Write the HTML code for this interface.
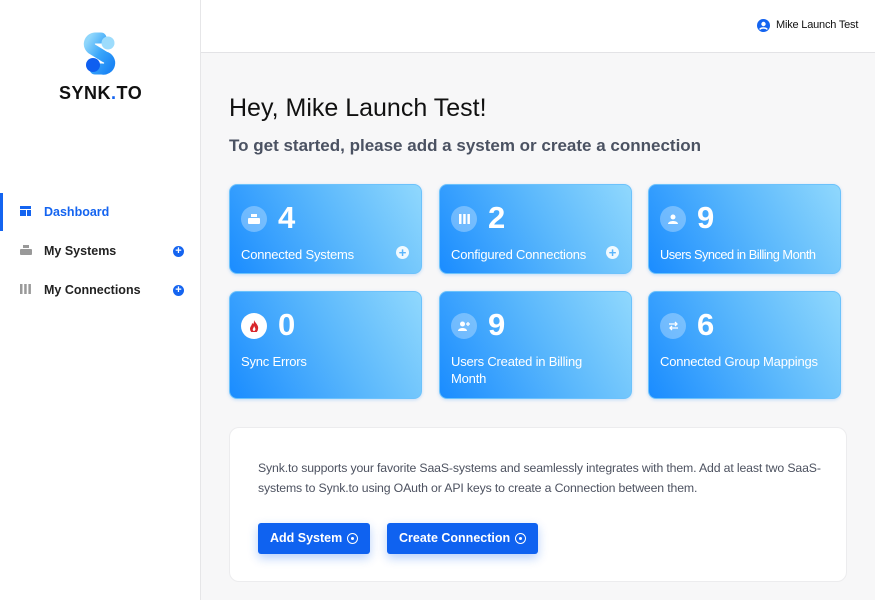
<!DOCTYPE html>
<html><head><meta charset="utf-8"><style>
*{box-sizing:border-box;margin:0;padding:0}
body{width:875px;height:600px;overflow:hidden;font-family:"Liberation Sans",sans-serif;background:#f7f7f8;position:relative}
.side{position:absolute;left:0;top:0;width:201px;height:600px;background:#fff;border-right:1px solid #e6e6e8}
.top{position:absolute;left:201px;top:0;right:0;height:53px;background:#fff;border-bottom:1px solid #e3e3e6}
.nav{position:absolute;left:0;width:200px;height:38px;font-size:12.5px;font-weight:bold;color:#222;display:flex;align-items:center}
.nav .ic{position:absolute;left:20px;top:13px}
.nav span.t{position:absolute;left:44px}
.nav .plus{position:absolute;left:173px;top:14px;width:11px;height:11px;border-radius:50%;background:#1464f0;color:#fff;font-size:11px;line-height:11px;text-align:center}
.card{position:absolute;width:193px;border-radius:8px;background:linear-gradient(60deg,#1a8cff 0%,#5bb8fc 55%,#90d8fd 100%);border:1px solid #6cc2fb;color:#fff;box-shadow:0 1px 3px rgba(30,140,255,.25)}
.card .c{position:absolute;left:11px;top:21px;width:26px;height:26px;border-radius:50%;background:rgba(255,255,255,.3);display:flex;align-items:center;justify-content:center}
.card .n{position:absolute;left:48px;top:15px;font-size:31px;font-weight:bold;line-height:36px}
.card .l{position:absolute;left:11px;top:61px;font-size:13px;line-height:17px;width:175px;letter-spacing:-0.2px}
.card .p{position:absolute;right:12px;top:61px;width:13px;height:13px;border-radius:50%;background:rgba(255,255,255,.9);color:#5ab5fb;font-size:13px;line-height:13px;text-align:center;font-weight:bold}
.btn{position:absolute;top:523px;height:31px;background:#0f62f0;border-radius:3px;color:#fff;font-size:12.5px;font-weight:bold;line-height:31px;padding-left:12px;box-shadow:0 4px 10px rgba(15,98,240,.3)}
.btn .o{position:absolute;right:12px;top:10px;width:11px;height:11px;border:1.5px solid #fff;border-radius:50%}
.btn .o:after{content:"";position:absolute;left:2.5px;top:2.5px;width:3px;height:3px;background:#fff;border-radius:50%}
</style></head><body>
<div class="side">
 <svg style="position:absolute;left:83px;top:32px" width="34" height="46" viewBox="0 0 34 46">
  <defs><linearGradient id="g" x1="0" y1="0" x2="1" y2="1"><stop offset="0" stop-color="#8fd6fb"/><stop offset="0.5" stop-color="#3aa6fa"/><stop offset="1" stop-color="#1c86f5"/></linearGradient></defs>
  <path d="M18 6H12a6 6 0 0 0-3 11l13 8a6 6 0 0 1-3 12H12" fill="none" stroke="url(#g)" stroke-width="11" stroke-linecap="round" stroke-linejoin="round"/>
  <circle cx="25" cy="11" r="6.5" fill="#9ddcfc"/>
  <circle cx="10" cy="33" r="7" fill="#0f5ff0"/>
 </svg>
 <div style="position:absolute;left:59px;top:83px;font-size:18px;font-weight:bold;letter-spacing:0.5px;color:#111">SYNK<span style="color:#1464f0">.</span>TO</div>
 <div style="position:absolute;left:0;top:193px;width:3px;height:38px;background:#1464f0"></div>
 <div class="nav" style="top:193px;color:#1464f0"><svg class="ic" width="11" height="10"><rect x="0" y="0" width="11" height="3" fill="#1464f0"/><rect x="0" y="4" width="6" height="6" fill="#1464f0"/><rect x="7" y="4" width="4" height="6" fill="#1464f0"/></svg><span class="t">Dashboard</span></div>
 <div class="nav" style="top:232px"><svg class="ic" width="12" height="10"><rect x="3" y="0" width="6" height="3" fill="#999"/><rect x="0" y="4" width="12" height="6" rx="1" fill="#999"/></svg><span class="t">My Systems</span><span class="plus">+</span></div>
 <div class="nav" style="top:271px"><svg class="ic" width="11" height="10"><rect x="0" y="0" width="2.5" height="10" fill="#999"/><rect x="4.2" y="0" width="2.5" height="10" fill="#999"/><rect x="8.4" y="0" width="2.5" height="10" fill="#999"/></svg><span class="t">My Connections</span><span class="plus">+</span></div>
</div>
<div class="top">
 <svg style="position:absolute;left:556px;top:19px" width="13" height="13" viewBox="0 0 13 13"><circle cx="6.5" cy="6.5" r="6.5" fill="#1464f0"/><circle cx="6.5" cy="5" r="2.2" fill="#fff"/><path d="M2.8 10.5c1-2 6.4-2 7.4 0" stroke="#fff" stroke-width="1.6" fill="none"/></svg>
 <div style="position:absolute;left:575px;top:19px;font-size:11px;color:#111;letter-spacing:-0.2px">Mike Launch Test</div>
</div>
<div style="position:absolute;left:229px;top:94px;font-size:25px;color:#111">Hey, Mike Launch Test!</div>
<div style="position:absolute;left:229px;top:136px;font-size:17px;font-weight:bold;color:#4b5262">To get started, please add a system or create a connection</div>

<div class="card" style="left:229px;top:184px;height:90px"><div class="c"><svg width="12" height="10"><rect x="3" y="0" width="6" height="3" fill="#fff"/><rect x="0" y="4" width="12" height="6" rx="1" fill="#fff"/></svg></div><div class="n">4</div><div class="l">Connected Systems</div><div class="p">+</div></div>
<div class="card" style="left:439px;top:184px;height:90px"><div class="c"><svg width="11" height="10"><rect x="0" width="2.5" height="10" fill="#fff"/><rect x="4.2" width="2.5" height="10" fill="#fff"/><rect x="8.4" width="2.5" height="10" fill="#fff"/></svg></div><div class="n">2</div><div class="l">Configured Connections</div><div class="p">+</div></div>
<div class="card" style="left:648px;top:184px;height:90px"><div class="c"><svg width="10" height="10"><circle cx="5" cy="3" r="2.5" fill="#fff"/><path d="M0 10c0-4 10-4 10 0z" fill="#fff"/></svg></div><div class="n">9</div><div class="l" style="white-space:nowrap;letter-spacing:-0.5px;font-size:12.8px">Users Synced in Billing Month</div></div>

<div class="card" style="left:229px;top:291px;height:108px"><div class="c" style="background:#fff"><svg width="10" height="12" viewBox="0 0 10 12"><path d="M5 0C6 3 10 5 9 9a4 4 0 0 1-8 0C1 6 3 6 3 3 4 4 5 5 5 0z" fill="#d9262b"/><path d="M5 6c1 2 2 3 1 4.5a1.5 1.5 0 0 1-2 0C3 9 5 8 5 6z" fill="#fff"/></svg></div><div class="n">0</div><div class="l">Sync Errors</div></div>
<div class="card" style="left:439px;top:291px;height:108px"><div class="c"><svg width="12" height="10"><circle cx="4.5" cy="3" r="2.5" fill="#fff"/><path d="M0 10c0-4 9-4 9 0z" fill="#fff"/><path d="M10 1v4M8 3h4" stroke="#fff" stroke-width="1.3"/></svg></div><div class="n">9</div><div class="l">Users Created in Billing<br>Month</div></div>
<div class="card" style="left:648px;top:291px;height:108px"><div class="c"><svg width="11" height="10"><path d="M1 3h8M7 1l2 2-2 2M10 7H2M4 5L2 7l2 2" stroke="#fff" stroke-width="1.3" fill="none"/></svg></div><div class="n">6</div><div class="l">Connected Group Mappings</div></div>

<div style="position:absolute;left:229px;top:427px;width:618px;height:155px;background:#fff;border:1px solid #ececee;border-radius:10px"></div>
<div style="position:absolute;left:258px;top:458px;white-space:nowrap;font-size:12.3px;line-height:20px;color:#4d5260;letter-spacing:-0.15px">Synk.to supports your favorite SaaS-systems and seamlessly integrates with them. Add at least two SaaS-<br>systems to Synk.to using OAuth or API keys to create a Connection between them.</div>
<div class="btn" style="left:258px;width:112px">Add System<span class="o"></span></div>
<div class="btn" style="left:387px;width:151px">Create Connection<span class="o"></span></div>
</body></html>
